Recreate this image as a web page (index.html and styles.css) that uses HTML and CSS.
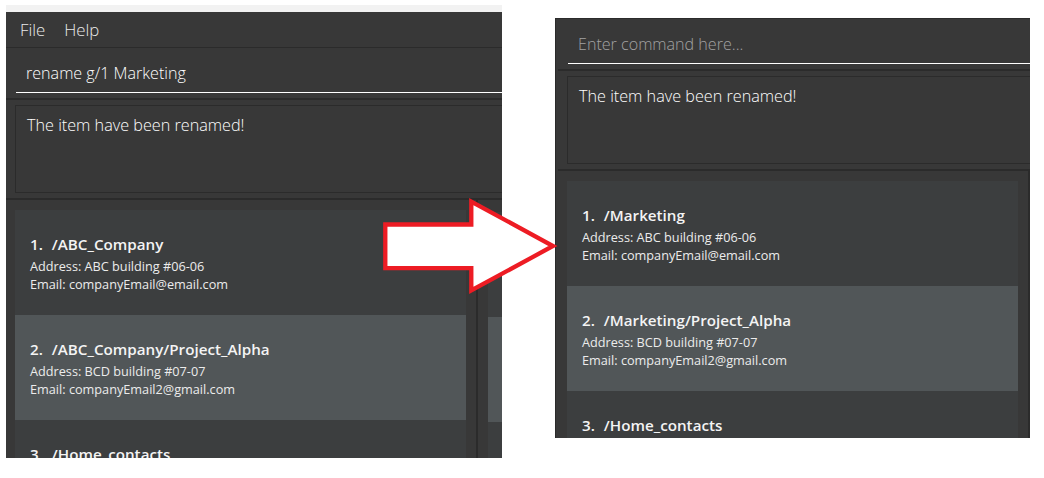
FILE: index.html
```html
<!DOCTYPE html>
<html lang="en">
<head>
<meta charset="utf-8">
<title>Rename command</title>
<link rel="stylesheet" href="styles.css">
</head>
<body>
<div class="canvas">
  <div class="window window--left">
    <div class="titlestrip"></div>
    <div class="app">
      <div class="menubar">
        <span class="menu-item">File</span>
        <span class="menu-item">Help</span>
      </div>
      <div class="command">
        <div class="command-input">rename g/1 Marketing</div>
      </div>
      <div class="result">
        <div class="result-box">The item have been renamed!</div>
      </div>
      <div class="lists">
        <div class="list">
          <div class="card">
            <div class="card-title"><span class="card-id">1.</span><span class="card-name">/ABC_Company</span></div>
            <div class="card-line card-line--first">Address: ABC building #06-06</div>
            <div class="card-line">Email: companyEmail@email.com</div>
          </div>
          <div class="card">
            <div class="card-title"><span class="card-id">2.</span><span class="card-name">/ABC_Company/Project_Alpha</span></div>
            <div class="card-line card-line--first">Address: BCD building #07-07</div>
            <div class="card-line">Email: companyEmail2@gmail.com</div>
          </div>
          <div class="card">
            <div class="card-title"><span class="card-id">3.</span><span class="card-name">/Home_contacts</span></div>
          </div>
        </div>
        <div class="list list--second">
          <div class="card"></div>
          <div class="card"></div>
          <div class="card"></div>
        </div>
      </div>
    </div>
  </div>

  <div class="window window--right">
    <div class="app">
      <div class="command">
        <div class="command-input command-input--empty">Enter command here...</div>
      </div>
      <div class="result">
        <div class="result-box">The item have been renamed!</div>
      </div>
      <div class="lists">
        <div class="list">
          <div class="card">
            <div class="card-title"><span class="card-id">1.</span><span class="card-name">/Marketing</span></div>
            <div class="card-line card-line--first">Address: ABC building #06-06</div>
            <div class="card-line">Email: companyEmail@email.com</div>
          </div>
          <div class="card">
            <div class="card-title"><span class="card-id">2.</span><span class="card-name">/Marketing/Project_Alpha</span></div>
            <div class="card-line card-line--first">Address: BCD building #07-07</div>
            <div class="card-line">Email: companyEmail2@gmail.com</div>
          </div>
          <div class="card">
            <div class="card-title"><span class="card-id">3.</span><span class="card-name">/Home_contacts</span></div>
          </div>
        </div>
      </div>
    </div>
  </div>
</div>

<svg class="arrow" width="1044" height="478" viewBox="0 0 1044 478" aria-hidden="true">
  <polygon points="385.3,224.5 471.3,224.5 471.3,201.5 553,246 471.3,290.5 471.3,268.2 385.3,268.2"
           fill="#ffffff" stroke="#ed1c24" stroke-width="4.3" stroke-linejoin="miter"/>
</svg>
</body>
</html>
```

FILE: styles.css
```css
* {
  box-sizing: border-box;
}

html, body {
  margin: 0;
  padding: 0;
  background: #ffffff;
}

body {
  width: 1044px;
  height: 478px;
  overflow: hidden;
  position: relative;
  font-family: "Open Sans", "Noto Sans", sans-serif;
  color: #ffffff;
}

.canvas {
  display: flex;
  align-items: flex-start;
  gap: 53px;
  padding-left: 6px;
}

.window {
  overflow: hidden;
  display: flex;
  flex-direction: column;
  background: #383838;
}

.window--left {
  width: 496px;
  height: 453px;
  margin-top: 5px;
}

.window--right {
  width: 475px;
  height: 420px;
  margin-top: 18px;
  border-left: 1px solid #2a2a2a;
  border-top: 1px solid #2b2b2b;
  padding-left: 2px;
}

.titlestrip {
  height: 7px;
  flex: none;
  background: #f2f2f2;
}

.app {
  width: 540px;
  flex: 1;
  background: #383838;
  display: flex;
  flex-direction: column;
}

/* menu bar */
.menubar {
  height: 36px;
  flex: none;
  display: flex;
  align-items: center;
  gap: 19px;
  padding-left: 14px;
  border-bottom: 1px solid #2b2b2b;
}

.menu-item {
  font-weight: 300;
  font-size: 16.8px;
  line-height: 22px;
  color: #ffffff;
  opacity: 0.9;
}

/* command box */
.command {
  height: 52px;
  flex: none;
  padding-left: 10px;
  border-bottom: 2px solid #2b2b2b;
}

.command-input {
  padding: 15px 0 9px 10px;
  line-height: 20px;
  font-weight: 300;
  font-size: 16.1px;
  color: #ffffff;
  border-bottom: 1px solid #ffffff;
  white-space: nowrap;
}

.command-input--empty {
  color: #a2a2a2;
}

/* result display */
.result {
  height: 98px;
  flex: none;
  padding: 5px 0 5px 9px;
}

.result-box {
  height: 88px;
  border: 1px solid #2b2b2b;
  padding: 9px 11px;
  line-height: 20px;
  font-weight: 300;
  font-size: 16.2px;
  color: #ffffff;
  white-space: nowrap;
}

/* lists */
.lists {
  flex: 1;
  display: flex;
  border-top: 2px solid #2b2b2b;
  min-height: 0;
}

.list {
  width: 472px;
  flex: none;
  padding: 10px 10px 0 9px;
  border-right: 2px solid #2b2b2b;
  overflow: hidden;
}

.list--second {
  flex: 1;
  width: auto;
  padding: 12px 0 0 10px;
  border-right: none;
}

.card {
  height: 105px;
  padding: 23px 15px 0;
  background: #3c3e3f;
  white-space: nowrap;
}

.card:nth-child(even) {
  background: #515658;
}

.card-title {
  display: flex;
  gap: 9px;
  font-weight: 600;
  font-size: 15.2px;
  line-height: 23px;
  color: #f4f4f4;
}

.card-line {
  font-size: 12.7px;
  line-height: 18px;
  color: #ececec;
}

.card-line--first {
  margin-top: 1px;
}

/* overlay arrow */
.arrow {
  position: absolute;
  left: 0;
  top: 0;
  pointer-events: none;
}
```
